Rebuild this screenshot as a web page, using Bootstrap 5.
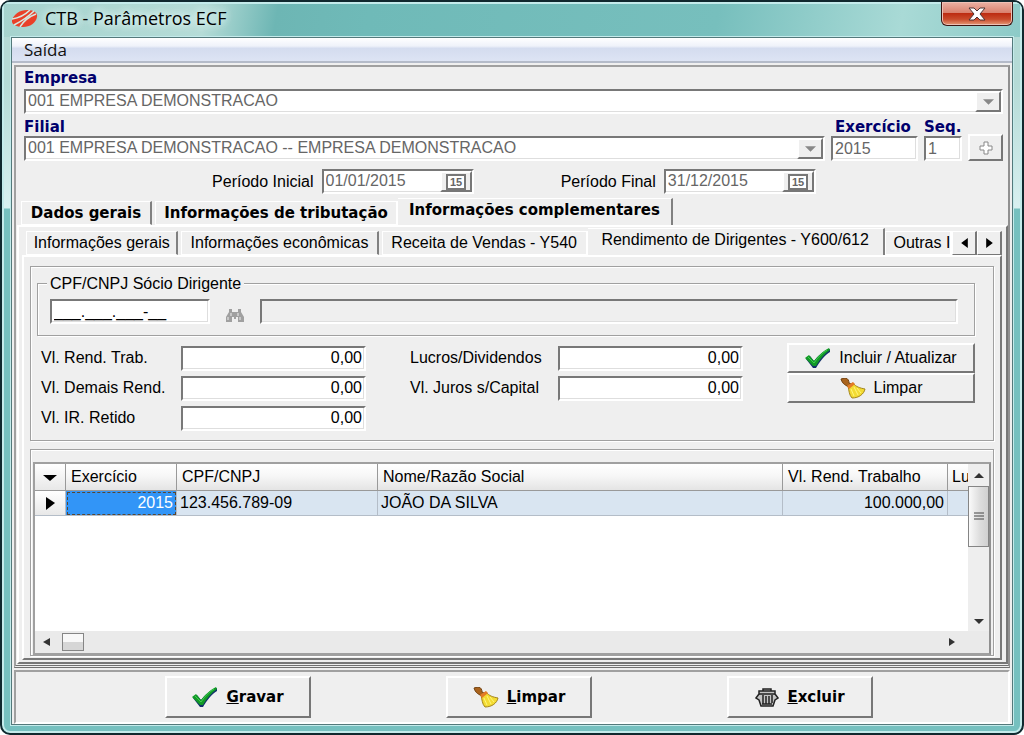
<!DOCTYPE html>
<html lang="pt-BR">
<head>
<meta charset="utf-8">
<meta name="viewport" content="width=device-width, initial-scale=1">
<title>CTB - Parâmetros ECF</title>
<link rel="stylesheet" href="https://cdn.jsdelivr.net/npm/bootstrap@5.3.0/dist/css/bootstrap.min.css">
<style>
  :root { --face: #efefef; --dark: #787878; --line: #a0a0a0; }
  body { background: #fff; font: 16px/20px "Liberation Sans", Arial, sans-serif; color: #000; }
  .win { border: 2px solid #10282e; border-radius: 10px; padding: 0 9px 8px;
    background: linear-gradient(#b4dad6 0, #b4dad6 80px, #d8f0f0 206px, #76c0bf 207px, #76c0bf 100%);
    box-shadow: inset 0 0 0 2px #c4ebeb; overflow: hidden; }
  .titlebar { height: 35px; margin: 0 -9px; padding: 0 9px 0 10px;
    background: linear-gradient(100deg, #a5d3ce 0, #b5dcd7 20%, #6db6b4 27%, #6fbab8 36%, #77bfbd 70%, #a9dad6 88%, #8ccac7 100%);
    box-shadow: inset 0 2px 0 #c4ebeb, inset 2px 0 0 #c4ebeb, inset -2px 0 0 #c4ebeb; }
  .brand { padding-top: 6px; gap: 7px; }
  .titlebar h1 { font: 18px/20px "Open Sans", sans-serif; text-shadow: 0 0 8px #e8fafa, 0 0 8px #e8fafa; }
  .closer { width: 72px; height: 24px; padding: 0; border: 1px solid #3c1512; border-top: 0; border-radius: 0 0 6px 6px;
    background: linear-gradient(#eab2a4 0, #d9806d 48%, #bd2c12 50%, #c94b2c 75%, #e59b78 100%); box-shadow: inset 0 0 0 1px #eec1b6; }
  .client { background: var(--face); border: 1px solid #54797b; box-shadow: 0 0 0 1px #c4ebeb; }
  .menubar { height: 25px; padding: 1px 12px; font: 17px/22px "Open Sans", sans-serif; border-bottom: 2px solid #b4bbc9;
    background: linear-gradient(#fff 0, #eff2fa 35%, #d4dcef 45%, #dde4f4 100%); }
  .menubar a { color: #111; text-decoration: none; }
  .panel-main, .panel-foot { border: 2px solid; border-color: var(--line) #fff #fff var(--line); }
  .panel-main { margin: 2px 2px 0; border-right-color: #909090; border-bottom: 3px double #707070; padding: 2px 0 1px 1px; }
  .panel-foot { margin: 2px 2px 0; padding: 4px 0 4px 14px; }
  .head-form { padding: 0 5px 0 7px; }
  .head-form .first-box { margin-top: 2px; }
  .head-form .line-two { gap: 6px; }
  .period-a { padding-right: 40px; }
  .cap { font: bold 15px/18px "DejaVu Sans", sans-serif; color: #00006c; }
  .sunk { height: 25px; background: #fff; border: 2px solid; border-color: var(--dark) #fff #fff var(--dark);
    box-shadow: inset -1px -1px 0 #dedede; padding: 0 2px; border-radius: 0; min-width: 0; color: #000; line-height: 20px; }
  input.sunk:disabled, .sunk :disabled { color: #666; opacity: 1; }
  .sunk select, .sunk input { appearance: none; border: 0; background: none; padding: 0; flex: 1; min-width: 0; height: 20px; }
  .w-year { width: 87px; } .w-seq { width: 38px; } .w-date { width: 152px; } .w-doc { width: 160px; }
  .knob { display: flex; align-items: center; justify-content: center; background: var(--face); padding: 0;
    border: 2px solid; border-color: #fff #777 #777 #fff; border-radius: 0; color: #000; }
  .plus { width: 35px; height: 27px; }
  .sunk .knob { width: 26px; margin-right: -2px; }
  .sunk .cal { width: 32px; }
  .tabrow { height: 27px; padding-top: 3px; white-space: nowrap; }
  .tabrow button { height: 24px; padding: 0; background: var(--face); border: 1px solid #fff; border-right: 2px solid #808080; border-bottom: 1px solid #fff; margin-right: 3px; }
  .tabrow button.active { height: 27px; margin-top: -3px; padding-bottom: 4px; border-bottom: 0; border-left: 0; }
  .tabrow .before { border-right-color: #fff; margin-right: 0; }
  .tabrow .knob { width: 25px; margin: 0; border-color: #fff #777 #777 #fff; }
  .tabs1 { margin-top: 4px; }
  .tabs1 button { font: bold 15px/18px "DejaVu Sans", sans-serif; }
  .pane { border: 2px solid; border-color: #fff #777 #777 #fff; }
  .pane-outer { padding: 1px 4px 2px 3px; }
  .pane-inner { padding: 9px 6px 2px; }
  .etch { border: 1px solid var(--line); box-shadow: inset 1px 1px 0 #fff, 1px 1px 0 #fff; }
  .entry { padding: 16px 18px 7px 6px; }
  fieldset.etch { position: relative; padding: 15px 16px 11px 12px; }
  fieldset legend { position: absolute; top: -10px; left: 9px; width: auto; margin: 0; padding: 0 3px; font-size: 16px; line-height: 20px; background: var(--face); }
  .fields { display: grid; grid-template-columns: 140px 185px minmax(10px, 1fr) 148px 185px minmax(10px, 1fr) 188px; grid-auto-rows: 30px; align-items: center; padding-left: 4px; margin-top: 7px; }
  .num { text-align: right; width: 100%; }
  .act { height: 30px; gap: 8px; }
  .list { padding: 12px 2px 0; }
  .gridbox { min-height: 180px; border: 2px solid var(--line); border-right-color: #909090; background: #fff; }
  .datagrid { table-layout: fixed; width: 100%; border-collapse: separate; border-spacing: 0; white-space: nowrap; }
  .datagrid th { height: 27px; font-weight: 400; padding: 0 5px; background: linear-gradient(#fff 0, #f7f7f7 45%, #e4e4e4 100%); border-right: 1px solid #999; border-bottom: 1px solid #999; overflow: hidden; }
  .datagrid td { height: 25px; padding: 0 3px; background: #d9e5f1; border-right: 1px solid #b4bdc8; border-bottom: 1px solid #b4bdc8; }
  .datagrid .mark-cell { background: linear-gradient(#fff, #e8e8e8); text-align: center; padding: 0; }
  .datagrid td.picked { background: #3295f7; color: #fff; outline: 1px dashed #5a4630; outline-offset: -2px; text-align: right; }
  .c-mark { width: 31px; } .c-year { width: 111px; } .c-doc { width: 201px; } .c-val { width: 165px; } .c-rest { width: 20px; }
  .vbar { width: 24px; background: #eee; padding: 9px 0 7px; }
  .vthumb { width: 21px; height: 61px; margin-top: 8px; border: 1px solid #858585; background: linear-gradient(90deg, #fafafa, #dedede 55%, #d0d0d0); }
  .hbar { height: 22px; background: #eaeaea; }
  .hthumb { width: 22px; height: 18px; border: 1px solid #858585; background: linear-gradient(#f8f8f8 50%, #d6d6d6 50%); }
  .hend { margin-right: 34px; }
  .foot-btn { width: 146px; height: 42px; gap: 8px; font: bold 15px/18px "DejaVu Sans", sans-serif; }
</style>
</head>
<body>
<svg class="d-none" aria-hidden="true">
  <symbol id="i-check" viewBox="0 0 26 20"><path d="M1 11l4-3 4 5C13 8 18 3 25 1v3c-5 3-10 9-14 16H8z" fill="#12306a"/><path d="M0 10l4-3 5 6C13 8 18 3 24 0l1 2c-6 4-10 9-14 16H8z" fill="#129a27"/><path d="M3 9l6 6C13 9 17 5 22 2" fill="none" stroke="#3fd050"/></symbol>
  <symbol id="i-broom" viewBox="0 0 26 21"><path d="M1 1l4-1c3 0 4 3 4 5l4 2-3 4-3-3C3 6 2 4 1 1z" fill="#a9631d" stroke="#70400f"/><path d="M8 8l5-3c3 4 7 5 12 6-1 5-6 9-13 9-3-3-3-8-4-12z" fill="#f3db32" stroke="#a3841b"/><path d="M11 11l3 7m0-9l4 8m-1-7l4 5" stroke="#fff57c" fill="none"/><path d="M7 8l6-4 2 2-6 5z" fill="#e37b27"/></symbol>
  <symbol id="i-down" viewBox="0 0 12 6"><path d="M0 0h12L6 6z" fill="currentColor"/></symbol>
  <symbol id="i-right" viewBox="0 0 8 12"><path d="M0 0l8 6-8 6z" fill="currentColor"/></symbol>
  <symbol id="i-cal" viewBox="0 0 20 16"><path d="M1 1h18v14H1z" fill="#fff" stroke="#777" stroke-width="2"/><text x="10" y="12" text-anchor="middle" font-family="Liberation Sans" font-size="11" font-weight="bold" fill="#666">15</text></symbol>
</svg>

<div class="win min-vh-100 d-flex flex-column">
  <header class="titlebar d-flex align-items-start justify-content-between">
    <div class="brand d-flex align-items-center">
      <svg width="26" height="17" viewBox="0 0 26 17" aria-hidden="true"><path d="M0 10C2 4 8 0 15 0c6 0 11 2 10 7-1 6-7 10-14 10C5 17-1 15 0 10z" fill="#ea4029"/><path d="M0 9C7 8 13 5 18 0M2 15C10 11 16 7 22 1M8 17c3-5 8-10 16-13" stroke="#d5e8e2" stroke-width="1.600" fill="none"/></svg>
      <h1 class="m-0">CTB - Parâmetros ECF</h1>
    </div>
    <button type="button" class="closer" aria-label="Fechar">
      <svg width="18" height="14" viewBox="0 0 18 14"><path d="M1 1h5l3 3 3-3h5l-5 6 5 6h-5l-3-3-3 3H1l5-6z" fill="#fff" stroke="#4b3535"/></svg>
    </button>
  </header>

  <main class="client d-flex flex-column flex-grow-1">
    <nav class="menubar"><a href="#">Saída</a></nav>

    <section class="panel-main d-flex flex-column flex-grow-1">
      <div class="head-form">
        <label class="cap d-block" for="empresa">Empresa</label>
        <div class="sunk first-box d-flex">
          <select id="empresa" disabled><option>001 EMPRESA DEMONSTRACAO</option></select>
          <span class="knob"><svg width="11" height="6" color="#888"><use href="#i-down"/></svg></span>
        </div>
        <div class="line-two d-flex align-items-end mt-1">
          <div class="flex-grow-1">
            <label class="cap d-block" for="filial">Filial</label>
            <div class="sunk d-flex">
              <select id="filial" disabled><option>001 EMPRESA DEMONSTRACAO -- EMPRESA DEMONSTRACAO</option></select>
              <span class="knob"><svg width="11" height="6" color="#888"><use href="#i-down"/></svg></span>
            </div>
          </div>
          <div class="w-year">
            <label class="cap d-block ps-1 text-nowrap" for="exercicio">Exercício</label>
            <input id="exercicio" class="sunk w-100" value="2015" disabled>
          </div>
          <div class="w-seq">
            <label class="cap d-block text-nowrap" for="seq">Seq.</label>
            <input id="seq" class="sunk w-100" value="1" disabled>
          </div>
          <button type="button" class="knob plus" aria-label="Adicionar" disabled>
            <svg width="14" height="14" viewBox="0 0 14 14"><path d="M5 1h4v4h4v4H9v4H5V9H1V5h4z" fill="#fff" stroke="#888"/></svg>
          </button>
        </div>
        <div class="row g-0 mt-2">
          <div class="col-6 period-a d-flex justify-content-end align-items-center gap-2">
            <label for="pini">Período Inicial</label>
            <div class="sunk w-date d-flex"><input id="pini" value="01/01/2015" disabled><button type="button" class="knob cal" aria-label="Calendário" disabled><svg width="20" height="16"><use href="#i-cal"/></svg></button></div>
          </div>
          <div class="col-4 d-flex justify-content-end align-items-center gap-2 pe-4">
            <label for="pfim">Período Final</label>
            <div class="sunk w-date d-flex"><input id="pfim" value="31/12/2015" disabled><button type="button" class="knob cal" aria-label="Calendário" disabled><svg width="20" height="16"><use href="#i-cal"/></svg></button></div>
          </div>
        </div>
      </div>

      <div class="tabrow tabs1 d-flex ps-1" role="tablist">
        <button type="button" role="tab" style="width:131px">Dados gerais</button>
        <button type="button" role="tab" class="before" style="width:243px">Informações de tributação</button>
        <button type="button" role="tab" class="active" style="width:275px">Informações complementares</button>
      </div>

      <div class="pane pane-outer d-flex flex-column flex-grow-1">
        <div class="tabrow d-flex ps-1" role="tablist">
          <button type="button" role="tab" style="width:153px">Informações gerais</button>
          <button type="button" role="tab" style="width:198px">Informações econômicas</button>
          <button type="button" role="tab" class="before" style="width:207px">Receita de Vendas - Y540</button>
          <button type="button" role="tab" class="active me-0" style="width:298px">Rendimento de Dirigentes - Y600/612</button>
          <button type="button" role="tab" class="flex-grow-1 overflow-hidden before ps-2 text-start">Outras I</button>
          <button type="button" class="knob" aria-label="Anterior"><svg width="7" height="10" viewBox="0 0 8 12"><path d="M8 0L0 6l8 6z"/></svg></button>
          <button type="button" class="knob" aria-label="Próxima"><svg width="7" height="10"><use href="#i-right"/></svg></button>
        </div>

        <div class="pane pane-inner d-flex flex-column flex-grow-1">
          <section class="etch entry">
            <fieldset class="etch d-flex align-items-center">
              <legend>CPF/CNPJ Sócio Dirigente</legend>
              <input class="sunk w-doc" value="___.___.___-__" aria-label="CPF/CNPJ">
              <button type="button" class="btn p-0 border-0 mx-3 pt-2" aria-label="Pesquisar" disabled>
                <svg width="18" height="15" viewBox="0 0 18 15" class="d-block"><path d="M3 1h3v3h6V1h3v3l3 5v5h-6V9h-2v2H8V9H6v5H0V9l3-5z" fill="#777"/><path d="M2 9v3m12-3v3M5 5v3m7-3v3" stroke="#eee"/></svg>
              </button>
              <input class="sunk flex-grow-1 bg-transparent" aria-label="Nome do sócio" readonly>
            </fieldset>
            <div class="fields">
              <label for="f1">Vl. Rend. Trab.</label><input id="f1" class="sunk num" value="0,00"><span></span>
              <label for="f4">Lucros/Dividendos</label><input id="f4" class="sunk num" value="0,00"><span></span>
              <button type="button" class="knob act"><svg width="26" height="20"><use href="#i-check"/></svg>Incluir / Atualizar</button>
              <label for="f2">Vl. Demais Rend.</label><input id="f2" class="sunk num" value="0,00"><span></span>
              <label for="f5">Vl. Juros s/Capital</label><input id="f5" class="sunk num" value="0,00"><span></span>
              <button type="button" class="knob act"><svg width="26" height="21"><use href="#i-broom"/></svg>Limpar</button>
              <label for="f3">Vl. IR. Retido</label><input id="f3" class="sunk num" value="0,00">
            </div>
          </section>

          <section class="etch list mt-2 flex-grow-1 d-flex flex-column">
            <div class="gridbox flex-grow-1 d-flex flex-column">
              <div class="d-flex flex-grow-1">
                <div class="flex-grow-1 overflow-hidden">
                  <table class="datagrid">
                    <colgroup><col class="c-mark"><col class="c-year"><col class="c-doc"><col><col class="c-val"><col class="c-rest"></colgroup>
                    <thead><tr><th class="mark-cell"><svg width="14" height="6" viewBox="0 0 14 6" class="d-inline"><path d="M0 0h14L7 6z"/></svg></th><th>Exercício</th><th>CPF/CNPJ</th><th>Nome/Razão Social</th><th>Vl. Rend. Trabalho</th><th class="border-end-0 ps-1 pe-0">Lu</th></tr></thead>
                    <tbody><tr><td class="mark-cell"><svg width="9" height="13"><path d="M0 0l9 6-9 7z"/></svg></td><td class="picked">2015</td><td>123.456.789-09</td><td>JOÃO DA SILVA</td><td class="text-end">100.000,00</td><td class="border-end-0"></td></tr></tbody>
                  </table>
                </div>
                <div class="vbar d-flex flex-column align-items-center">
                  <svg width="10" height="5"><path d="M0 5l5-5 5 5z" fill="#333"/></svg>
                  <div class="vthumb d-flex align-items-center justify-content-center"><svg width="10" height="9"><path d="M0 1h10M0 4h10M0 7h10" stroke="#444"/></svg></div>
                  <svg class="mt-auto" width="10" height="5"><path d="M0 0h10L5 5z" fill="#333"/></svg>
                </div>
              </div>
              <div class="hbar d-flex align-items-center ps-2">
                <svg width="7" height="8" class="me-2"><path d="M7 0L0 4l7 4z" fill="#333"/></svg>
                <div class="hthumb ms-1"></div>
                <svg width="6" height="8" class="ms-auto hend"><path d="M0 0l6 4-6 4z" fill="#333"/></svg>
              </div>
            </div>
          </section>
        </div>
      </div>
    </section>

    <footer class="panel-foot d-flex justify-content-evenly">
      <button type="button" class="knob foot-btn"><svg width="26" height="20"><use href="#i-check"/></svg><span><u>G</u>ravar</span></button>
      <button type="button" class="knob foot-btn"><svg width="26" height="21"><use href="#i-broom"/></svg><span><u>L</u>impar</span></button>
      <button type="button" class="knob foot-btn"><svg width="24" height="19" viewBox="0 0 24 19"><path d="M8 1h8v2H8zM4 3h16v3l3 4-3 2-2 6H6l-2-6-3-2 3-4z" fill="#c4c4c4" stroke="#222" stroke-width="1.500"/><path d="M4 6h16M8 7v9M11 8v8M14 8v8M17 7v8M7 16h10" stroke="#222" stroke-width="1.500"/></svg><span><u>E</u>xcluir</span></button>
    </footer>
  </main>
</div>
<script src="https://cdn.jsdelivr.net/npm/bootstrap@5.3.0/dist/js/bootstrap.bundle.min.js"></script>
</body>
</html>
